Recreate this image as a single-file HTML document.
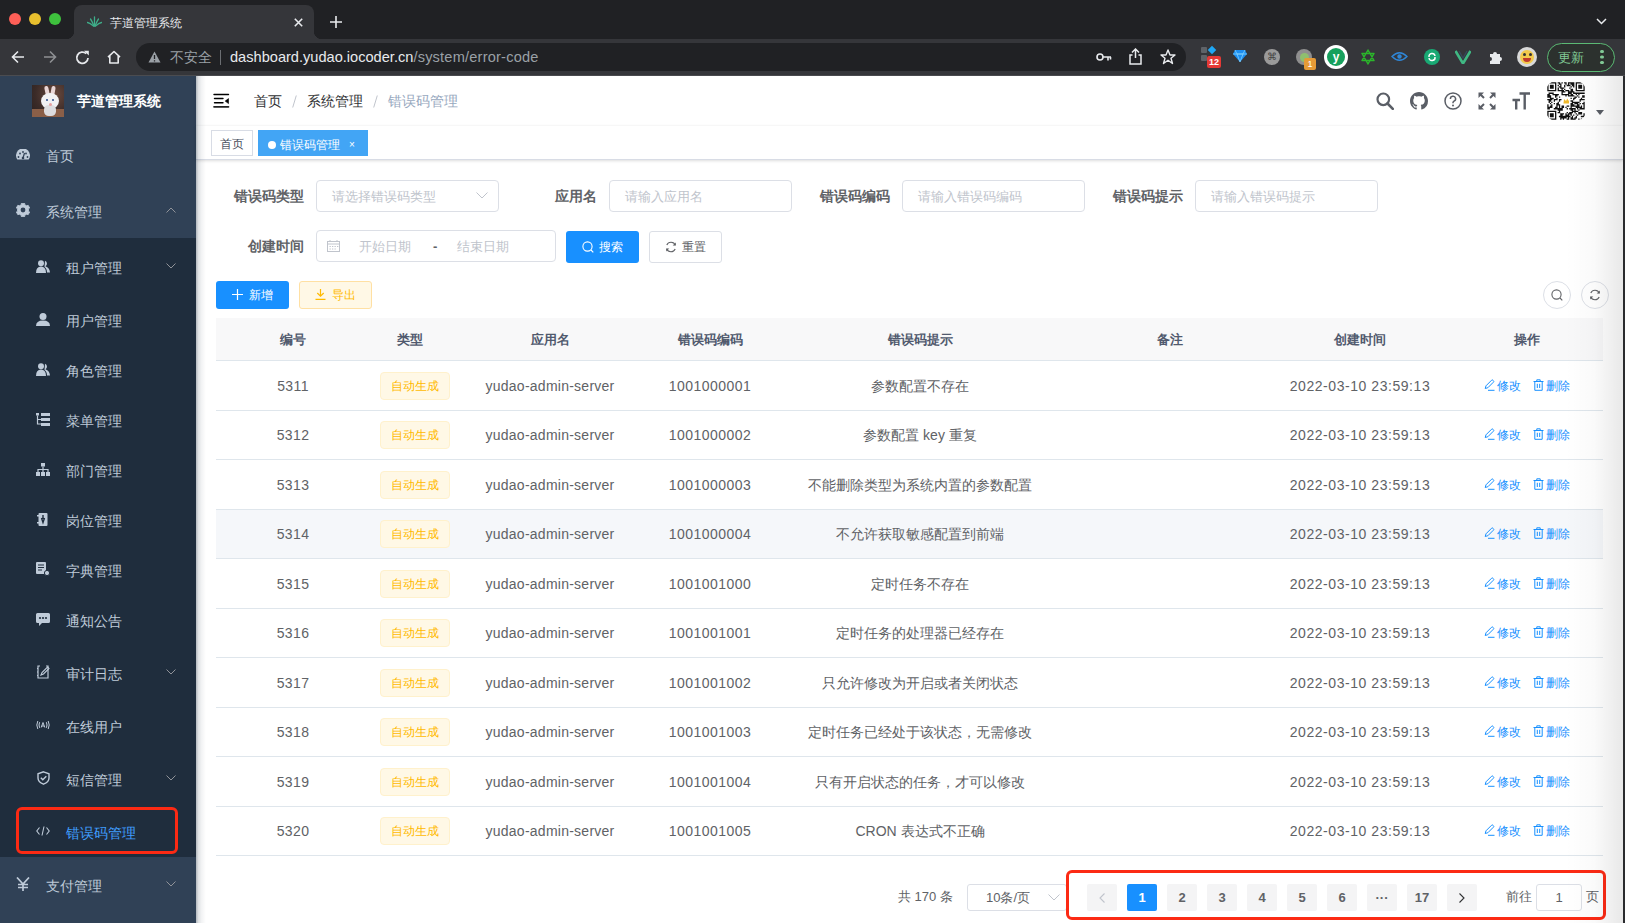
<!DOCTYPE html>
<html><head><meta charset="utf-8">
<style>
*{box-sizing:border-box;margin:0;padding:0}
html,body{width:1625px;height:923px;overflow:hidden;background:#fff;font-family:"Liberation Sans",sans-serif;position:relative}
.abs{position:absolute}
/* chrome */
#tabbar{position:absolute;left:0;top:0;width:1625px;height:39px;background:#202124;z-index:2}
#toolbar{position:absolute;left:0;top:38px;width:1625px;height:37px;background:#35363a}
#tbline{position:absolute;left:0;top:75px;width:1625px;height:1px;background:#4b4c50}
.dot{position:absolute;width:12px;height:12px;border-radius:50%}
#tab{position:absolute;left:74px;top:5px;width:240px;height:34px;background:#35363a;border-radius:8px 8px 0 0}
#tab:before,#tab:after{content:"";position:absolute;bottom:0;width:8px;height:8px}
#tab:before{left:-8px;background:radial-gradient(circle at 0 0,#202124 8px,#35363a 8.5px)}
#tab:after{right:-8px;background:radial-gradient(circle at 100% 0,#202124 8px,#35363a 8.5px)}
#omni{position:absolute;left:136px;top:5px;width:1050px;height:28px;border-radius:14px;background:#202124}
/* sidebar */
#sidebar{position:absolute;left:0;top:76px;width:196px;height:847px;background:#304156;overflow:hidden}
#sub{position:absolute;left:0;top:162px;width:196px;height:619px;background:#1f2d3d}
.mi{position:absolute;left:0;width:196px;color:#bfcbd9;font-size:14px}
.mi span{position:absolute;top:0}
.mi svg{position:absolute}
/* main */
#main{position:absolute;left:196px;top:76px;width:1427px;height:847px;background:#fff}
#navbar{position:absolute;left:0;top:0;width:1427px;height:50px;background:#fff;box-shadow:0 1px 4px rgba(0,21,41,.08)}
#tags{position:absolute;left:0;top:50px;width:1427px;height:34px;background:#fff;border-bottom:1px solid #d8dce5;box-shadow:0 1px 3px 0 rgba(0,0,0,.12),0 0 3px 0 rgba(0,0,0,.04)}
#sbshadow{position:absolute;left:196px;top:76px;width:10px;height:847px;background:linear-gradient(to right,rgba(0,21,41,.30),rgba(0,21,41,.12) 25%,rgba(0,21,41,.05) 55%,rgba(0,21,41,0))}
.tag{position:absolute;top:4px;height:26px;line-height:27px;font-size:12px;border:1px solid #d8dce5;color:#495060;background:#fff;padding:0 8px}
.lbl{position:absolute;font-size:14px;font-weight:bold;color:#606266;line-height:32px;text-align:right}
.inp{position:absolute;height:32px;border:1px solid #dcdfe6;border-radius:4px;background:#fff;font-size:13px;color:#c0c4cc;line-height:32px;padding-left:15px}
.btn{position:absolute;border-radius:3px;font-size:12px;text-align:center}
/* table */
#table{position:absolute;left:20px;top:241px;width:1387px}
.th{position:absolute;top:0;height:44px;line-height:44px;font-size:13px;font-weight:bold;color:#515a6e;text-align:center}
.row{position:absolute;left:0;width:1387px;border-bottom:1px solid #dfe6ec}
.td{position:absolute;top:0;font-size:14px;color:#606266;text-align:center;white-space:nowrap}
.etag{display:inline-block;height:28px;line-height:26px;padding:0 10px;font-size:12px;color:#ffba00;background:#fff8e6;border:1px solid #fff1cc;border-radius:4px}
.op{color:#1890ff;font-size:12px}
.pg{position:absolute;top:808px;width:30px;height:28px;line-height:28px;text-align:center;background:#f4f4f5;color:#606266;font-size:13px;font-weight:bold;border-radius:2px}
.redbox{position:absolute;border:3px solid #fc2a14;border-radius:6px}
</style></head><body>

<!-- ========== CHROME ========== -->
<div id="tabbar">
  <div class="dot" style="left:9px;top:13px;background:#fe5f57"></div>
  <div class="dot" style="left:29px;top:13px;background:#e8bf2e"></div>
  <div class="dot" style="left:49px;top:13px;background:#3ec13d"></div>
  <div id="tab">
    <svg class="abs" style="left:13px;top:11px" width="15" height="11" viewBox="0 0 15 11"><g stroke="#3fae8a" stroke-width="1.3" fill="none" stroke-linecap="round"><path d="M7.5 10 L7.5 1"/><path d="M7 10 Q5 5 3.5 3"/><path d="M8 10 Q10 5 11.5 3"/><path d="M6.5 10 Q3 7 0.5 6.5"/><path d="M8.5 10 Q12 7 14.5 6.5"/></g></svg>
    <div class="abs" style="left:36px;top:9.5px;font-size:12px;color:#e8eaed;line-height:16px">芋道管理系统</div>
    <svg class="abs" style="left:220px;top:13px" width="9" height="9" viewBox="0 0 9 9"><path d="M0.8 0.8L8.2 8.2M8.2 0.8L0.8 8.2" stroke="#e8eaed" stroke-width="1.6"/></svg>
  </div>
  <svg class="abs" style="left:330px;top:16px" width="12" height="12" viewBox="0 0 12 12"><path d="M6 0V12M0 6H12" stroke="#e8eaed" stroke-width="1.6"/></svg>
  <svg class="abs" style="left:1596px;top:18px" width="11" height="7" viewBox="0 0 11 7"><path d="M1 1L5.5 5.5L10 1" stroke="#e8eaed" stroke-width="1.5" fill="none"/></svg>
</div>
<div id="toolbar">
  <svg class="abs" style="left:11px;top:12px" width="14" height="14" viewBox="0 0 14 14"><path d="M13 7H1.5M7 1.5L1.5 7L7 12.5" stroke="#e8eaed" stroke-width="1.6" fill="none"/></svg>
  <svg class="abs" style="left:43px;top:12px" width="14" height="14" viewBox="0 0 14 14"><path d="M1 7H12.5M7 1.5L12.5 7L7 12.5" stroke="#8e9093" stroke-width="1.6" fill="none"/></svg>
  <svg class="abs" style="left:75px;top:12px" width="15" height="15" viewBox="0 0 15 15"><path d="M13 8A5.6 5.6 0 1 1 11.2 3.6" stroke="#e8eaed" stroke-width="1.8" fill="none"/><path d="M9 0.8L13.8 0.8L13.8 5.6Z" fill="#e8eaed"/></svg>
  <svg class="abs" style="left:107px;top:12px" width="14" height="14" viewBox="0 0 14 14"><path d="M1 7.2L7 1.5L13 7.2M2.8 5.8V13H11.2V5.8" stroke="#e8eaed" stroke-width="1.6" fill="none" stroke-linejoin="round"/></svg>
  <div id="omni">
    <svg class="abs" style="left:12px;top:8px" width="13" height="12" viewBox="0 0 13 12"><path d="M6.5 0.5L12.5 11.5H0.5Z" fill="#9aa0a6"/><path d="M6.5 4V8M6.5 9.2V10.4" stroke="#202124" stroke-width="1.3"/></svg>
    <div class="abs" style="left:34px;top:5px;font-size:14px;color:#9aa0a6;line-height:18px">不安全</div>
    <div class="abs" style="left:84px;top:7px;width:1px;height:15px;background:#6b6e72"></div>
    <div class="abs" style="left:94px;top:5px;font-size:14.6px;color:#e8eaed;line-height:18px;white-space:nowrap">dashboard.yudao.iocoder.cn<span style="color:#9aa0a6;letter-spacing:0.2px">/system/error-code</span></div>
    <svg class="abs" style="left:960px;top:9px" width="16" height="10" viewBox="0 0 16 10"><circle cx="4" cy="5" r="3" stroke="#e8eaed" stroke-width="1.6" fill="none"/><path d="M7 5H15M12 5V8.5M14.5 5V7.5" stroke="#e8eaed" stroke-width="1.6"/></svg>
    <svg class="abs" style="left:993px;top:5px" width="13" height="17" viewBox="0 0 13 17"><path d="M6.5 1V10M3 4.5L6.5 1L10 4.5M3.5 7H1V16H12V7H9.5" stroke="#e8eaed" stroke-width="1.5" fill="none"/></svg>
    <svg class="abs" style="left:1024px;top:6px" width="16" height="16" viewBox="0 0 16 16"><path d="M8 1L10 6H15L11 9.2L12.5 14.5L8 11.3L3.5 14.5L5 9.2L1 6H6Z" stroke="#e8eaed" stroke-width="1.4" fill="none" stroke-linejoin="round"/></svg>
  </div>
  <!-- extensions -->
  <div class="abs" style="left:1201px;top:9px;width:6px;height:6px;background:#5f6368;border-radius:1px"></div>
  <div class="abs" style="left:1201px;top:17px;width:6px;height:6px;background:#5f6368;border-radius:1px"></div>
  <div class="abs" style="left:1209px;top:9px;width:6px;height:6px;background:#1ea8f5;transform:rotate(45deg)"></div>
  <div class="abs" style="left:1207px;top:18px;width:14px;height:12px;background:#e53935;border-radius:2px;color:#fff;font-size:9px;line-height:12px;text-align:center;font-weight:bold">12</div>
  <svg class="abs" style="left:1233px;top:11px" width="14" height="14" viewBox="0 0 14 14"><path d="M2 1H12L14 5L7 13L0 5Z" fill="#1d8ff2"/><path d="M2 1L4 5H10L12 1M0 5H14M4 5L7 13L10 5" stroke="#7fd0ff" stroke-width="0.8" fill="none"/></svg>
  <div class="abs" style="left:1264px;top:11px;width:16px;height:16px;border-radius:50%;background:#9a9a9a;color:#444;font-size:10px;line-height:16px;text-align:center">⌘</div>
  <div class="abs" style="left:1296px;top:11px;width:16px;height:16px;border-radius:50%;background:#8f8f8f"></div>
  <div class="abs" style="left:1300px;top:15px;width:9px;height:9px;border-radius:50%;background:#8fbf6e"></div>
  <div class="abs" style="left:1304px;top:20px;width:12px;height:12px;background:#e59a36;border-radius:2px;color:#fff;font-size:9px;line-height:12px;text-align:center">1</div>
  <div class="abs" style="left:1324px;top:7px;width:24px;height:24px;border-radius:50%;background:#fff"></div>
  <div class="abs" style="left:1327px;top:10px;width:18px;height:18px;border-radius:50%;background:#17a05d;color:#fff;font-size:12px;line-height:18px;text-align:center;font-weight:bold">y</div>
  <svg class="abs" style="left:1360px;top:11px" width="16" height="16" viewBox="0 0 16 16"><path d="M8 1L14 11.5H2Z M8 15L2 4.5H14Z" stroke="#2bb52b" stroke-width="1.5" fill="none" stroke-linejoin="round"/></svg>
  <svg class="abs" style="left:1391px;top:13px" width="17" height="11" viewBox="0 0 17 11"><path d="M1 5.5Q8.5 -2 16 5.5Q8.5 13 1 5.5Z" stroke="#2f86d6" stroke-width="1.4" fill="none"/><circle cx="8.5" cy="5.5" r="2.2" fill="#2f86d6"/></svg>
  <div class="abs" style="left:1424px;top:11px;width:16px;height:16px;border-radius:50%;background:#19a974"></div>
  <svg class="abs" style="left:1427px;top:14px" width="10" height="10" viewBox="0 0 10 10"><path d="M2 5A3 3 0 0 1 8 4M8 5A3 3 0 0 1 2 6" stroke="#fff" stroke-width="1.4" fill="none"/></svg>
  <svg class="abs" style="left:1455px;top:12px" width="16" height="14" viewBox="0 0 16 14"><path d="M0.5 1L8 13.5L15.5 1" stroke="#40b883" stroke-width="2.6" fill="none"/><path d="M4 1L8 8L12 1" stroke="#35495e" stroke-width="1.2" fill="none"/></svg>
  <svg class="abs" style="left:1488px;top:12px" width="15" height="15" viewBox="0 0 15 15"><path d="M2 4H5A2 2 0 1 1 9 4H12V7A2 2 0 1 1 12 11V14H2V11A2 2 0 1 0 2 7Z" fill="#e8eaed"/></svg>
  <div class="abs" style="left:1517px;top:9px;width:20px;height:20px;border-radius:50%;background:#d9d9d9"></div>
  <div class="abs" style="left:1520px;top:12px;width:14px;height:14px;border-radius:50%;background:#f2c94c"></div><div class="abs" style="left:1523px;top:15px;width:3px;height:3px;border-radius:50%;background:#333"></div><div class="abs" style="left:1529px;top:15px;width:3px;height:3px;border-radius:50%;background:#333"></div><div class="abs" style="left:1523px;top:20px;width:8px;height:4px;border-radius:0 0 4px 4px;background:#c0392b"></div>
  <div class="abs" style="left:1547px;top:5px;width:68px;height:29px;border-radius:14.5px;border:1.5px solid #5bb974;background:#2c312e"></div>
  <div class="abs" style="left:1558px;top:11.5px;font-size:13px;color:#81c995;line-height:16px">更新</div>
  <div class="abs" style="left:1600px;top:11.5px;width:3.5px;height:3.5px;border-radius:50%;background:#81c995;box-shadow:0 5.5px 0 #81c995,0 11px 0 #81c995"></div>
</div>
<div id="tbline"></div>

<!-- ========== SIDEBAR ========== -->
<div id="sidebar">
  <div id="sub"></div>
  <div class="abs" style="left:32px;top:9px;width:32px;height:32px;background:radial-gradient(circle at 70% 30%,#6a4a3e,#3b2b28 60%,#2a201e);overflow:hidden"><div class="abs" style="left:0;top:24px;width:32px;height:8px;background:#8a5f48"></div><div class="abs" style="left:13px;top:1px;width:4px;height:10px;border-radius:3px;background:#e9d6d6;transform:rotate(-12deg)"></div><div class="abs" style="left:19px;top:1px;width:4px;height:10px;border-radius:3px;background:#e9d6d6;transform:rotate(10deg)"></div><div class="abs" style="left:9px;top:8px;width:18px;height:16px;border-radius:50%;background:#f1f1f3"></div><div class="abs" style="left:12px;top:20px;width:12px;height:11px;border-radius:40%;background:#dcdcdf"></div><div class="abs" style="left:14px;top:14px;width:2px;height:2px;border-radius:50%;background:#2a4a8a"></div><div class="abs" style="left:20px;top:14px;width:2px;height:2px;border-radius:50%;background:#2a4a8a"></div><div class="abs" style="left:17px;top:18px;width:3px;height:3px;border-radius:50%;background:#e7a0a0"></div></div>
  <div class="abs" style="left:77px;top:16px;font-size:14px;font-weight:bold;color:#fff;line-height:18px;white-space:nowrap">芋道管理系统</div>
  <div class="mi" style="top:50px;height:56px"><div class="abs" style="left:16.0px;top:22.5px;line-height:0"><svg width="14" height="11" viewBox="0 0 14 11"><path d="M1.3 10.5A7 7 0 1 1 12.7 10.5Z" fill="#bfcbd9"/><circle cx="2.5" cy="8" r=".9" fill="#304156"/><circle cx="4" cy="4.5" r=".9" fill="#304156"/><circle cx="7" cy="3" r=".9" fill="#304156"/><circle cx="10" cy="4.5" r=".9" fill="#304156"/><circle cx="11.5" cy="8" r=".9" fill="#304156"/><path d="M7 9L8.5 4" stroke="#304156" stroke-width="1.2"/><circle cx="7" cy="9" r="1.3" fill="#304156"/></svg></div><span style="left:46px;top:20.5px;line-height:18px;color:#bfcbd9">首页</span></div>
  <div class="mi" style="top:106px;height:56px"><div class="abs" style="left:16.0px;top:21.0px;line-height:0"><svg width="14" height="14" viewBox="0 0 14 14"><path d="M5.40 0.18L8.60 0.18L8.73 1.67L10.75 2.84L12.10 2.21L13.70 4.98L12.48 5.84L12.48 8.16L13.70 9.02L12.10 11.79L10.75 11.16L8.73 12.33L8.60 13.82L5.40 13.82L5.27 12.33L3.25 11.16L1.90 11.79L0.30 9.02L1.52 8.16L1.52 5.84L0.30 4.98L1.90 2.21L3.25 2.84L5.27 1.67Z" fill="#bfcbd9" stroke="#bfcbd9" stroke-width="0.8" stroke-linejoin="round"/><circle cx="7" cy="7" r="2.4" fill="#304156"/></svg></div><span style="left:46px;top:20.5px;line-height:18px;color:#bfcbd9">系统管理</span><div class="abs" style="left:166px;top:25.0px;line-height:0"><svg width="10" height="6" viewBox="0 0 10 6"><path d="M0.5 5.5L5 1L9.5 5.5" stroke="#909399" stroke-width="1" fill="none"/></svg></div></div>
  <div class="mi" style="top:162px;height:56px"><div class="abs" style="left:36.0px;top:21.5px;line-height:0"><svg width="14" height="13" viewBox="0 0 14 13"><circle cx="5" cy="3.3" r="3" fill="#bfcbd9"/><path d="M0 13Q0 6.5 5 6.5Q10 6.5 10 13Z" fill="#bfcbd9"/><path d="M9 0.8A3 3 0 0 1 9.5 6.2Q13.5 7.5 14 12.5H11Q11 8.5 8.5 7" fill="#bfcbd9"/></svg></div><span style="left:66px;top:20.5px;line-height:18px;color:#bfcbd9">租户管理</span><div class="abs" style="left:166px;top:25.0px;line-height:0"><svg width="10" height="6" viewBox="0 0 10 6"><path d="M0.5 0.5L5 5L9.5 0.5" stroke="#909399" stroke-width="1" fill="none"/></svg></div></div>
  <div class="mi" style="top:218px;height:50px"><div class="abs" style="left:36.0px;top:18.5px;line-height:0"><svg width="14" height="13" viewBox="0 0 14 13"><ellipse cx="7" cy="3.5" rx="3.5" ry="3.5" fill="#bfcbd9"/><path d="M0 13Q0 7.5 7 7.5Q14 7.5 14 13Z" fill="#bfcbd9"/></svg></div><span style="left:66px;top:17.5px;line-height:18px;color:#bfcbd9">用户管理</span></div>
  <div class="mi" style="top:268px;height:50px"><div class="abs" style="left:36.0px;top:18.5px;line-height:0"><svg width="14" height="13" viewBox="0 0 14 13"><circle cx="5" cy="3.3" r="3" fill="#bfcbd9"/><path d="M0 13Q0 6.5 5 6.5Q10 6.5 10 13Z" fill="#bfcbd9"/><path d="M9 0.8A3 3 0 0 1 9.5 6.2Q13.5 7.5 14 12.5H11Q11 8.5 8.5 7" fill="#bfcbd9"/></svg></div><span style="left:66px;top:17.5px;line-height:18px;color:#bfcbd9">角色管理</span></div>
  <div class="mi" style="top:318px;height:50px"><div class="abs" style="left:36.0px;top:18.5px;line-height:0"><svg width="14" height="13" viewBox="0 0 14 13"><rect x="0" y="0" width="3" height="2.5" fill="#bfcbd9"/><path d="M1.5 2.5V11H5M1.5 6.5H5" stroke="#bfcbd9" stroke-width="1.2" fill="none"/><rect x="5" y="0" width="9" height="3" fill="#bfcbd9"/><rect x="5" y="5" width="9" height="3" fill="#bfcbd9"/><rect x="5" y="10" width="9" height="3" fill="#bfcbd9"/></svg></div><span style="left:66px;top:17.5px;line-height:18px;color:#bfcbd9">菜单管理</span></div>
  <div class="mi" style="top:368px;height:50px"><div class="abs" style="left:36.0px;top:18.5px;line-height:0"><svg width="14" height="13" viewBox="0 0 14 13"><rect x="5" y="0" width="4" height="3.5" fill="#bfcbd9"/><path d="M7 3.5V6.5M2 9V6.5H12V9M7 6.5V9" stroke="#bfcbd9" stroke-width="1.2" fill="none"/><rect x="0" y="9" width="4" height="4" fill="#bfcbd9"/><rect x="5" y="9" width="4" height="4" fill="#bfcbd9"/><rect x="10" y="9" width="4" height="4" fill="#bfcbd9"/></svg></div><span style="left:66px;top:17.5px;line-height:18px;color:#bfcbd9">部门管理</span></div>
  <div class="mi" style="top:418px;height:50px"><div class="abs" style="left:37.0px;top:18.5px;line-height:0"><svg width="12" height="13" viewBox="0 0 12 13"><rect x="1.5" y="0" width="9" height="13" rx="1" fill="#bfcbd9"/><rect x="0" y="2" width="2" height="1.5" fill="#bfcbd9"/><rect x="0" y="9" width="2" height="1.5" fill="#bfcbd9"/><path d="M6 2V6M4.5 5L6 9.5L7.5 5" stroke="#1f2d3d" stroke-width="1.4" fill="none"/></svg></div><span style="left:66px;top:17.5px;line-height:18px;color:#bfcbd9">岗位管理</span></div>
  <div class="mi" style="top:468px;height:50px"><div class="abs" style="left:36.0px;top:18.0px;line-height:0"><svg width="14" height="14" viewBox="0 0 14 14"><rect x="0" y="0" width="10" height="12" rx="1" fill="#bfcbd9"/><path d="M2 3H8M2 5.5H8M2 8H6" stroke="#1f2d3d" stroke-width="1.1"/><circle cx="11" cy="11" r="2.6" fill="#bfcbd9" stroke="#1f2d3d" stroke-width="1"/></svg></div><span style="left:66px;top:17.5px;line-height:18px;color:#bfcbd9">字典管理</span></div>
  <div class="mi" style="top:518px;height:50px"><div class="abs" style="left:36.0px;top:18.5px;line-height:0"><svg width="14" height="13" viewBox="0 0 14 13"><path d="M1.5 0H12.5A1.5 1.5 0 0 1 14 1.5V8.5A1.5 1.5 0 0 1 12.5 10H6L3 13V10H1.5A1.5 1.5 0 0 1 0 8.5V1.5A1.5 1.5 0 0 1 1.5 0Z" fill="#bfcbd9"/><circle cx="4" cy="5" r="1.1" fill="#1f2d3d"/><circle cx="7" cy="5" r="1.1" fill="#1f2d3d"/><circle cx="10" cy="5" r="1.1" fill="#1f2d3d"/></svg></div><span style="left:66px;top:17.5px;line-height:18px;color:#bfcbd9">通知公告</span></div>
  <div class="mi" style="top:568px;height:56px"><div class="abs" style="left:36.5px;top:21.0px;line-height:0"><svg width="13" height="14" viewBox="0 0 13 14"><path d="M9 1H11V13H1V1H3M1 3.5H0M1 7H0M1 10.5H0" stroke="#bfcbd9" stroke-width="1.2" fill="none"/><path d="M4 10L5 7.5L10.5 2L12 3.5L6.5 9Z" stroke="#bfcbd9" stroke-width="1.1" fill="none"/></svg></div><span style="left:66px;top:20.5px;line-height:18px;color:#bfcbd9">审计日志</span><div class="abs" style="left:166px;top:25.0px;line-height:0"><svg width="10" height="6" viewBox="0 0 10 6"><path d="M0.5 0.5L5 5L9.5 0.5" stroke="#909399" stroke-width="1" fill="none"/></svg></div></div>
  <div class="mi" style="top:624px;height:50px"><div class="abs" style="left:36.0px;top:20.0px;line-height:0"><svg width="14" height="10" viewBox="0 0 14 10"><path d="M1.8 1Q-0.2 5 1.8 9M12.2 1Q14.2 5 12.2 9M3.6 2.2Q2.4 5 3.6 7.8M10.4 2.2Q11.6 5 10.4 7.8" stroke="#bfcbd9" stroke-width="1" fill="none"/><path d="M5.2 7.5L7 2.5L8.8 7.5M5.8 6H8.2" stroke="#bfcbd9" stroke-width="1" fill="none"/></svg></div><span style="left:66px;top:17.5px;line-height:18px;color:#bfcbd9">在线用户</span></div>
  <div class="mi" style="top:674px;height:56px"><div class="abs" style="left:36.5px;top:21.0px;line-height:0"><svg width="13" height="14" viewBox="0 0 13 14"><path d="M6.5 0.8L12 2.8V7Q12 11 6.5 13.2Q1 11 1 7V2.8Z" stroke="#bfcbd9" stroke-width="1.4" fill="none"/><path d="M3.8 6.8L5.8 8.8L9.3 5.3" stroke="#bfcbd9" stroke-width="1.4" fill="none"/></svg></div><span style="left:66px;top:20.5px;line-height:18px;color:#bfcbd9">短信管理</span><div class="abs" style="left:166px;top:25.0px;line-height:0"><svg width="10" height="6" viewBox="0 0 10 6"><path d="M0.5 0.5L5 5L9.5 0.5" stroke="#909399" stroke-width="1" fill="none"/></svg></div></div>
  <div class="mi" style="top:730px;height:50px"><div class="abs" style="left:36.0px;top:20.0px;line-height:0"><svg width="14" height="10" viewBox="0 0 14 10"><path d="M3.5 1.5L0.8 5L3.5 8.5M10.5 1.5L13.2 5L10.5 8.5M8 0.5L6 9.5" stroke="#bfcbd9" stroke-width="1.1" fill="none"/></svg></div><span style="left:66px;top:17.5px;line-height:18px;color:#409eff">错误码管理</span></div>
  <div class="mi" style="top:780px;height:56px"><div class="abs" style="left:16.0px;top:21.0px;line-height:0"><svg width="14" height="14" viewBox="0 0 14 14"><path d="M1 0.5L7 7L13 0.5M7 7V14M2 7.5H12M2 10.5H12" stroke="#bfcbd9" stroke-width="1.7" fill="none"/></svg></div><span style="left:46px;top:20.5px;line-height:18px;color:#bfcbd9">支付管理</span><div class="abs" style="left:166px;top:25.0px;line-height:0"><svg width="10" height="6" viewBox="0 0 10 6"><path d="M0.5 0.5L5 5L9.5 0.5" stroke="#909399" stroke-width="1" fill="none"/></svg></div></div>
</div>
<!-- ========== MAIN ========== -->
<div id="main">
  <div id="navbar">
    <svg class="abs" style="left:17px;top:17px" width="17" height="16" viewBox="0 0 17 16"><path d="M1 1.5H15.5M1.5 5.5H10M1.5 9.7H10" stroke="#000" stroke-width="1.4" stroke-linecap="round"/><path d="M1 13.8H15.5" stroke="#222" stroke-width="1.7" stroke-linecap="round"/><path d="M15.5 5.6L12.2 8.1L15.5 10.6Z" fill="#000" stroke="#000" stroke-width="0.6" stroke-linejoin="round"/></svg>
    <div class="abs" style="left:58px;top:16px;font-size:14px;line-height:18px;color:#303133;white-space:nowrap">首页<span style="display:inline-block;margin:0 10px;vertical-align:-2px;line-height:0"><svg width="5" height="13" viewBox="0 0 5 13"><path d="M4.3 0.5L0.7 12.5" stroke="#c0c4cc" stroke-width="1"/></svg></span>系统管理<span style="display:inline-block;margin:0 10px;vertical-align:-2px;line-height:0"><svg width="5" height="13" viewBox="0 0 5 13"><path d="M4.3 0.5L0.7 12.5" stroke="#c0c4cc" stroke-width="1"/></svg></span><span style="color:#97a8be">错误码管理</span></div>
    <svg class="abs" style="left:1180px;top:16px" width="18" height="18" viewBox="0 0 18 18"><circle cx="7.3" cy="7.3" r="5.8" stroke="#5a5e66" stroke-width="2.2" fill="none"/><path d="M11.5 11.5L16.8 16.8" stroke="#5a5e66" stroke-width="2.6" stroke-linecap="round"/></svg>
    <svg class="abs" style="left:1214px;top:16px" width="18" height="18" viewBox="0 0 16 16"><path fill="#5a5e66" d="M8 0C3.58 0 0 3.58 0 8c0 3.540 2.29 6.53 5.47 7.59.4.07.55-.17.55-.38 0-.19-.01-.82-.01-1.49-2.01.37-2.53-.49-2.69-.94-.09-.23-.48-.94-.82-1.13-.28-.15-.68-.52-.01-.53.63-.01 1.08.58 1.23.82.72 1.21 1.87.87 2.33.66.07-.52.28-.87.51-1.07-1.78-.2-3.64-.89-3.64-3.95 0-.87.31-1.59.82-2.15-.08-.2-.36-1.02.08-2.12 0 0 .67-.21 2.2.82.64-.18 1.32-.27 2-.27.68 0 1.36.09 2 .27 1.53-1.04 2.2-.82 2.2-.82.44 1.1.16 1.92.08 2.12.51.56.82 1.27.82 2.15 0 3.07-1.87 3.75-3.65 3.95.29.25.54.73.54 1.48 0 1.07-.01 1.93-.01 2.2 0 .21.15.46.55.38A8.013 8.013 0 0 0 16 8c0-4.42-3.58-8-8-8z"/></svg>
    <svg class="abs" style="left:1248px;top:16px" width="18" height="18" viewBox="0 0 18 18"><circle cx="9" cy="9" r="8" stroke="#5a5e66" stroke-width="1.5" fill="none"/><path d="M6.4 7A2.6 2.6 0 1 1 9.8 9.3Q9 9.7 9 10.8V11.3" stroke="#5a5e66" stroke-width="1.5" fill="none"/><circle cx="9" cy="13.5" r="1" fill="#5a5e66"/></svg>
    <svg class="abs" style="left:1282px;top:16px" width="18" height="18" viewBox="0 0 18 18"><g stroke="#5a5e66" stroke-width="2" fill="none"><path d="M1.5 1.5L6 6M16.5 1.5L12 6M1.5 16.5L6 12M16.5 16.5L12 12"/></g><g fill="#5a5e66"><path d="M0.5 0.5H6L0.5 6Z"/><path d="M17.5 0.5H12L17.5 6Z"/><path d="M0.5 17.5H6L0.5 12Z"/><path d="M17.5 17.5H12L17.5 12Z"/></g></svg>
    <svg class="abs" style="left:1316px;top:16px" width="18" height="18" viewBox="0 0 18 18"><path d="M7.5 1.5H18M12.7 1.5V17.5M0.5 8H8M4.2 8V17.5" stroke="#5a5e66" stroke-width="2.4" fill="none"/></svg>
    <div class="abs" style="left:1350px;top:5px;width:40px;height:40px;border-radius:10px;overflow:hidden;background:#fff">
      <svg width="40" height="40" viewBox="-1 -1 31 31"><rect x="-1" y="-1" width="31" height="31" fill="#fff"/><path fill="#111" fill-rule="evenodd" d="M0 0h7v7h-7zM1 1v5h5v-5zM2 2h3v3h-3zM22 0h7v7h-7zM23 1v5h5v-5zM24 2h3v3h-3zM0 22h7v7h-7zM1 23v5h5v-5zM2 24h3v3h-3z"/><path fill="#111" d="M8 0h1v1h-1zM9 0h1v1h-1zM11 0h1v1h-1zM13 0h1v1h-1zM14 0h1v1h-1zM16 0h1v1h-1zM17 0h1v1h-1zM18 0h1v1h-1zM19 0h1v1h-1zM20 0h1v1h-1zM9 1h1v1h-1zM10 1h1v1h-1zM14 1h1v1h-1zM16 1h1v1h-1zM18 1h1v1h-1zM19 1h1v1h-1zM20 1h1v1h-1zM8 2h1v1h-1zM10 2h1v1h-1zM13 2h1v1h-1zM15 2h1v1h-1zM16 2h1v1h-1zM17 2h1v1h-1zM19 2h1v1h-1zM20 2h1v1h-1zM9 3h1v1h-1zM10 3h1v1h-1zM13 3h1v1h-1zM18 3h1v1h-1zM20 3h1v1h-1zM8 4h1v1h-1zM10 4h1v1h-1zM11 4h1v1h-1zM12 4h1v1h-1zM17 4h1v1h-1zM8 5h1v1h-1zM11 5h1v1h-1zM13 5h1v1h-1zM18 5h1v1h-1zM19 5h1v1h-1zM8 6h1v1h-1zM9 6h1v1h-1zM10 6h1v1h-1zM11 6h1v1h-1zM12 6h1v1h-1zM14 6h1v1h-1zM15 6h1v1h-1zM16 6h1v1h-1zM18 6h1v1h-1zM19 6h1v1h-1zM11 7h1v1h-1zM12 7h1v1h-1zM13 7h1v1h-1zM16 7h1v1h-1zM17 7h1v1h-1zM18 7h1v1h-1zM19 7h1v1h-1zM20 7h1v1h-1zM1 8h1v1h-1zM2 8h1v1h-1zM3 8h1v1h-1zM4 8h1v1h-1zM11 8h1v1h-1zM16 8h1v1h-1zM17 8h1v1h-1zM18 8h1v1h-1zM20 8h1v1h-1zM21 8h1v1h-1zM22 8h1v1h-1zM23 8h1v1h-1zM24 8h1v1h-1zM25 8h1v1h-1zM26 8h1v1h-1zM27 8h1v1h-1zM28 8h1v1h-1zM0 9h1v1h-1zM1 9h1v1h-1zM4 9h1v1h-1zM5 9h1v1h-1zM6 9h1v1h-1zM7 9h1v1h-1zM8 9h1v1h-1zM11 9h1v1h-1zM12 9h1v1h-1zM13 9h1v1h-1zM14 9h1v1h-1zM15 9h1v1h-1zM16 9h1v1h-1zM18 9h1v1h-1zM19 9h1v1h-1zM22 9h1v1h-1zM24 9h1v1h-1zM0 10h1v1h-1zM1 10h1v1h-1zM2 10h1v1h-1zM6 10h1v1h-1zM7 10h1v1h-1zM14 10h1v1h-1zM16 10h1v1h-1zM17 10h1v1h-1zM18 10h1v1h-1zM19 10h1v1h-1zM20 10h1v1h-1zM23 10h1v1h-1zM27 10h1v1h-1zM28 10h1v1h-1zM0 11h1v1h-1zM1 11h1v1h-1zM2 11h1v1h-1zM6 11h1v1h-1zM9 11h1v1h-1zM21 11h1v1h-1zM22 11h1v1h-1zM24 11h1v1h-1zM27 11h1v1h-1zM28 11h1v1h-1zM2 12h1v1h-1zM3 12h1v1h-1zM4 12h1v1h-1zM7 12h1v1h-1zM18 12h1v1h-1zM20 12h1v1h-1zM21 12h1v1h-1zM26 12h1v1h-1zM0 13h1v1h-1zM1 13h1v1h-1zM2 13h1v1h-1zM3 13h1v1h-1zM5 13h1v1h-1zM6 13h1v1h-1zM7 13h1v1h-1zM9 13h1v1h-1zM10 13h1v1h-1zM20 13h1v1h-1zM25 13h1v1h-1zM26 13h1v1h-1zM27 13h1v1h-1zM28 13h1v1h-1zM1 14h1v1h-1zM2 14h1v1h-1zM5 14h1v1h-1zM9 14h1v1h-1zM18 14h1v1h-1zM19 14h1v1h-1zM25 14h1v1h-1zM1 15h1v1h-1zM3 15h1v1h-1zM8 15h1v1h-1zM19 15h1v1h-1zM20 15h1v1h-1zM21 15h1v1h-1zM22 15h1v1h-1zM23 15h1v1h-1zM24 15h1v1h-1zM28 15h1v1h-1zM2 16h1v1h-1zM5 16h1v1h-1zM7 16h1v1h-1zM8 16h1v1h-1zM18 16h1v1h-1zM19 16h1v1h-1zM21 16h1v1h-1zM22 16h1v1h-1zM23 16h1v1h-1zM25 16h1v1h-1zM27 16h1v1h-1zM28 16h1v1h-1zM0 17h1v1h-1zM3 17h1v1h-1zM7 17h1v1h-1zM8 17h1v1h-1zM9 17h1v1h-1zM18 17h1v1h-1zM19 17h1v1h-1zM20 17h1v1h-1zM23 17h1v1h-1zM24 17h1v1h-1zM28 17h1v1h-1zM0 18h1v1h-1zM2 18h1v1h-1zM3 18h1v1h-1zM7 18h1v1h-1zM9 18h1v1h-1zM11 18h1v1h-1zM12 18h1v1h-1zM15 18h1v1h-1zM16 18h1v1h-1zM18 18h1v1h-1zM19 18h1v1h-1zM20 18h1v1h-1zM21 18h1v1h-1zM22 18h1v1h-1zM23 18h1v1h-1zM24 18h1v1h-1zM26 18h1v1h-1zM28 18h1v1h-1zM0 19h1v1h-1zM1 19h1v1h-1zM2 19h1v1h-1zM3 19h1v1h-1zM6 19h1v1h-1zM7 19h1v1h-1zM9 19h1v1h-1zM11 19h1v1h-1zM12 19h1v1h-1zM14 19h1v1h-1zM18 19h1v1h-1zM22 19h1v1h-1zM23 19h1v1h-1zM24 19h1v1h-1zM25 19h1v1h-1zM26 19h1v1h-1zM28 19h1v1h-1zM0 20h1v1h-1zM1 20h1v1h-1zM5 20h1v1h-1zM6 20h1v1h-1zM7 20h1v1h-1zM8 20h1v1h-1zM9 20h1v1h-1zM10 20h1v1h-1zM11 20h1v1h-1zM15 20h1v1h-1zM17 20h1v1h-1zM18 20h1v1h-1zM19 20h1v1h-1zM20 20h1v1h-1zM21 20h1v1h-1zM23 20h1v1h-1zM25 20h1v1h-1zM26 20h1v1h-1zM27 20h1v1h-1zM28 20h1v1h-1zM8 21h1v1h-1zM9 21h1v1h-1zM10 21h1v1h-1zM11 21h1v1h-1zM18 21h1v1h-1zM19 21h1v1h-1zM21 21h1v1h-1zM24 21h1v1h-1zM9 22h1v1h-1zM19 22h1v1h-1zM20 22h1v1h-1zM21 22h1v1h-1zM22 22h1v1h-1zM23 22h1v1h-1zM8 23h1v1h-1zM9 23h1v1h-1zM15 23h1v1h-1zM17 23h1v1h-1zM18 23h1v1h-1zM19 23h1v1h-1zM21 23h1v1h-1zM24 23h1v1h-1zM25 23h1v1h-1zM26 23h1v1h-1zM10 24h1v1h-1zM11 24h1v1h-1zM12 24h1v1h-1zM14 24h1v1h-1zM16 24h1v1h-1zM17 24h1v1h-1zM18 24h1v1h-1zM22 24h1v1h-1zM24 24h1v1h-1zM25 24h1v1h-1zM26 24h1v1h-1zM28 24h1v1h-1zM10 25h1v1h-1zM11 25h1v1h-1zM14 25h1v1h-1zM15 25h1v1h-1zM16 25h1v1h-1zM18 25h1v1h-1zM20 25h1v1h-1zM23 25h1v1h-1zM28 25h1v1h-1zM9 26h1v1h-1zM10 26h1v1h-1zM11 26h1v1h-1zM12 26h1v1h-1zM13 26h1v1h-1zM14 26h1v1h-1zM15 26h1v1h-1zM16 26h1v1h-1zM17 26h1v1h-1zM19 26h1v1h-1zM22 26h1v1h-1zM26 26h1v1h-1zM27 26h1v1h-1zM28 26h1v1h-1zM10 27h1v1h-1zM11 27h1v1h-1zM12 27h1v1h-1zM13 27h1v1h-1zM14 27h1v1h-1zM16 27h1v1h-1zM18 27h1v1h-1zM19 27h1v1h-1zM21 27h1v1h-1zM22 27h1v1h-1zM10 28h1v1h-1zM12 28h1v1h-1zM15 28h1v1h-1zM16 28h1v1h-1zM18 28h1v1h-1zM19 28h1v1h-1zM20 28h1v1h-1zM21 28h1v1h-1zM24 28h1v1h-1zM26 28h1v1h-1zM28 28h1v1h-1z"/><rect x="11.5" y="11.5" width="6" height="6" fill="#fff"/><path d="M12.5 16.5L13 13L14.5 14.5L15.5 12.5L16.5 14.5L17 13L16.8 16.5Z" fill="#f0b92c"/></svg>
    </div>
    <svg class="abs" style="left:1400px;top:34px" width="8" height="5" viewBox="0 0 8 5"><path d="M0 0H8L4 5Z" fill="#5a5e66"/></svg>
  </div>
  <div id="tags">
    <div class="tag" style="left:15px">首页</div>
    <div class="tag" style="left:62px;background:#42a5f5;border-color:#42a5f5;color:#fff;padding-left:9px;padding-right:12px"><span style="display:inline-block;width:8px;height:8px;border-radius:50%;background:#fff;margin-right:4px;position:relative;top:0px"></span>错误码管理<span style="margin-left:9px;font-size:10px;vertical-align:1px">×</span></div>
  </div>
  <div id="content">
   <div class="lbl" style="left:20px;top:104px;width:88px">错误码类型</div>
   <div class="inp" style="left:120px;top:104px;width:183px">请选择错误码类型<span class="abs" style="left:159px;top:11px;line-height:0"><svg width="12" height="7" viewBox="0 0 12 7"><path d="M0.5 0.5L6 6L11.5 0.5" stroke="#c0c4cc" stroke-width="1" fill="none"/></svg></span></div>
   <div class="lbl" style="left:313px;top:104px;width:88px">应用名</div>
   <div class="inp" style="left:413px;top:104px;width:183px">请输入应用名</div>
   <div class="lbl" style="left:606px;top:104px;width:88px">错误码编码</div>
   <div class="inp" style="left:706px;top:104px;width:183px">请输入错误码编码</div>
   <div class="lbl" style="left:899px;top:104px;width:88px">错误码提示</div>
   <div class="inp" style="left:999px;top:104px;width:183px">请输入错误码提示</div>
   <div class="lbl" style="left:20px;top:154px;width:88px">创建时间</div>
   <div class="inp" style="left:120px;top:154px;width:240px;padding:0"><span class="abs" style="left:10px;top:9px;line-height:0"><svg width="13" height="12" viewBox="0 0 13 12"><rect x="0.5" y="1.5" width="12" height="10" stroke="#c0c4cc" fill="none"/><path d="M0.5 4H12.5" stroke="#c0c4cc"/><path d="M3 0V2M10 0V2" stroke="#c0c4cc"/><g fill="#c0c4cc"><rect x="2.5" y="6" width="1.3" height="1"/><rect x="5" y="6" width="1.3" height="1"/><rect x="7.5" y="6" width="1.3" height="1"/><rect x="10" y="6" width="1.3" height="1"/><rect x="2.5" y="8.5" width="1.3" height="1"/><rect x="5" y="8.5" width="1.3" height="1"/><rect x="7.5" y="8.5" width="1.3" height="1"/></g></svg></span><span class="abs" style="left:42px;top:0">开始日期</span><span class="abs" style="left:116px;top:0;color:#606266;font-weight:bold">-</span><span class="abs" style="left:140px;top:0">结束日期</span></div>
   <div class="btn" style="left:370px;top:155px;width:73px;height:32px;background:#1890ff;color:#fff"><span class="abs" style="left:16px;top:10px;line-height:0"><svg width="12" height="12" viewBox="0 0 12 12"><circle cx="5.5" cy="5.5" r="4.6" stroke="#fff" stroke-width="1.1" fill="none"/><path d="M9 9L11.3 11.3" stroke="#fff" stroke-width="1.1"/></svg></span><span class="abs" style="left:33px;top:8px;line-height:16px">搜索</span></div>
   <div class="btn" style="left:453px;top:155px;width:73px;height:32px;background:#fff;border:1px solid #dcdfe6;color:#606266"><span class="abs" style="left:15px;top:9px;line-height:0"><svg width="12" height="12" viewBox="0 0 12 12"><path d="M10.3 4.2A4.6 4.6 0 0 0 1.8 4M1.7 7.8A4.6 4.6 0 0 0 10.2 8" stroke="#606266" stroke-width="1.1" fill="none"/><path d="M10.8 1.5V4.6H7.7Z" fill="#606266"/><path d="M1.2 10.5V7.4H4.3Z" fill="#606266"/></svg></span><span class="abs" style="left:32px;top:7px;line-height:16px">重置</span></div>
   <div class="btn" style="left:20px;top:205px;width:73px;height:28px;background:#1890ff;color:#fff"><span class="abs" style="left:16px;top:8px;line-height:0"><svg width="11" height="11" viewBox="0 0 11 11"><path d="M5.5 0V11M0 5.5H11" stroke="#fff" stroke-width="1.2"/></svg></span><span class="abs" style="left:33px;top:6px;line-height:16px">新增</span></div>
   <div class="btn" style="left:103px;top:205px;width:73px;height:28px;background:#fff8e6;border:1px solid #ffe0a3;color:#ffba00"><span class="abs" style="left:15px;top:7px;line-height:0"><svg width="11" height="11" viewBox="0 0 11 11"><path d="M5.5 0V7M2.3 4L5.5 7.2L8.7 4M0.5 10.3H10.5" stroke="#ffba00" stroke-width="1.2" fill="none"/></svg></span><span class="abs" style="left:32px;top:5px;line-height:16px">导出</span></div>
   <div class="btn" style="left:1347px;top:205px;width:28px;height:28px;border-radius:50%;border:1px solid #dcdfe6;background:#fff"><span class="abs" style="left:7px;top:7px;line-height:0"><svg width="12" height="12" viewBox="0 0 12 12"><circle cx="5.5" cy="5.5" r="4.6" stroke="#606266" stroke-width="1.1" fill="none"/><path d="M9 9L11.3 11.3" stroke="#606266" stroke-width="1.1"/></svg></span></div>
   <div class="btn" style="left:1385px;top:205px;width:28px;height:28px;border-radius:50%;border:1px solid #dcdfe6;background:#fff"><span class="abs" style="left:7px;top:7px;line-height:0"><svg width="12" height="12" viewBox="0 0 12 12"><path d="M10.3 4.2A4.6 4.6 0 0 0 1.8 4M1.7 7.8A4.6 4.6 0 0 0 10.2 8" stroke="#606266" stroke-width="1.1" fill="none"/><path d="M10.8 1.5V4.6H7.7Z" fill="#606266"/><path d="M1.2 10.5V7.4H4.3Z" fill="#606266"/></svg></span></div>
   <div class="abs" style="left:20px;top:242px;width:1387px;height:43px;background:#f8f8f9;border-bottom:1px solid #dfe6ec"></div>
   <div class="th" style="left:20px;top:242px;width:154px;height:43px;line-height:43px">编号</div>
   <div class="th" style="left:174px;top:242px;width:80px;height:43px;line-height:43px">类型</div>
   <div class="th" style="left:254px;top:242px;width:200px;height:43px;line-height:43px">应用名</div>
   <div class="th" style="left:454px;top:242px;width:120px;height:43px;line-height:43px">错误码编码</div>
   <div class="th" style="left:574px;top:242px;width:300px;height:43px;line-height:43px">错误码提示</div>
   <div class="th" style="left:874px;top:242px;width:200px;height:43px;line-height:43px">备注</div>
   <div class="th" style="left:1074px;top:242px;width:180px;height:43px;line-height:43px">创建时间</div>
   <div class="th" style="left:1254px;top:242px;width:153px;height:43px;line-height:43px">操作</div>
   <div class="row" style="left:20px;top:285.0px;height:49.5px;background:#fff"></div>
   <div class="td" style="left:20px;top:297.5px;width:154px;height:24px;line-height:24px;letter-spacing:0.4px">5311</div>
   <div class="abs" style="left:184px;top:295.5px"><span class="etag">自动生成</span></div>
   <div class="td" style="left:254px;top:297.5px;width:200px;height:24px;line-height:24px;letter-spacing:0.25px">yudao-admin-server</div>
   <div class="td" style="left:454px;top:297.5px;width:120px;height:24px;line-height:24px;letter-spacing:0.45px">1001000001</div>
   <div class="td" style="left:574px;top:297.5px;width:300px;height:24px;line-height:24px;">参数配置不存在</div>
   <div class="td" style="left:1074px;top:297.5px;width:180px;height:24px;line-height:24px;letter-spacing:0.55px">2022-03-10 23:59:13</div>
   <div class="abs op" style="left:1288px;top:301.5px;line-height:16px;white-space:nowrap"><span style="display:inline-block;vertical-align:-1px;line-height:0;margin-right:2px"><svg width="11" height="12" viewBox="0 0 11 12"><path d="M1.2 9.5L2 6.8L7.5 1.3A1 1 0 0 1 9 1.3L9.4 1.7A1 1 0 0 1 9.4 3.2L3.9 8.7Z" stroke="#1890ff" stroke-width="1" fill="none"/><path d="M4 11.3H10.5" stroke="#1890ff" stroke-width="1"/></svg></span>修改<span style="display:inline-block;width:12px"></span><span style="display:inline-block;vertical-align:-1px;line-height:0;margin-right:2px"><svg width="11" height="12" viewBox="0 0 11 12"><path d="M0.5 2.5H10.5M3.8 2.5V0.8H7.2V2.5M1.8 2.5V11.3H9.2V2.5M4.3 4.8V9M6.7 4.8V9" stroke="#1890ff" stroke-width="1" fill="none"/></svg></span>删除</div>
   <div class="row" style="left:20px;top:334.5px;height:49.5px;background:#fff"></div>
   <div class="td" style="left:20px;top:347.0px;width:154px;height:24px;line-height:24px;letter-spacing:0.4px">5312</div>
   <div class="abs" style="left:184px;top:345.0px"><span class="etag">自动生成</span></div>
   <div class="td" style="left:254px;top:347.0px;width:200px;height:24px;line-height:24px;letter-spacing:0.25px">yudao-admin-server</div>
   <div class="td" style="left:454px;top:347.0px;width:120px;height:24px;line-height:24px;letter-spacing:0.45px">1001000002</div>
   <div class="td" style="left:574px;top:347.0px;width:300px;height:24px;line-height:24px;">参数配置 key 重复</div>
   <div class="td" style="left:1074px;top:347.0px;width:180px;height:24px;line-height:24px;letter-spacing:0.55px">2022-03-10 23:59:13</div>
   <div class="abs op" style="left:1288px;top:351.0px;line-height:16px;white-space:nowrap"><span style="display:inline-block;vertical-align:-1px;line-height:0;margin-right:2px"><svg width="11" height="12" viewBox="0 0 11 12"><path d="M1.2 9.5L2 6.8L7.5 1.3A1 1 0 0 1 9 1.3L9.4 1.7A1 1 0 0 1 9.4 3.2L3.9 8.7Z" stroke="#1890ff" stroke-width="1" fill="none"/><path d="M4 11.3H10.5" stroke="#1890ff" stroke-width="1"/></svg></span>修改<span style="display:inline-block;width:12px"></span><span style="display:inline-block;vertical-align:-1px;line-height:0;margin-right:2px"><svg width="11" height="12" viewBox="0 0 11 12"><path d="M0.5 2.5H10.5M3.8 2.5V0.8H7.2V2.5M1.8 2.5V11.3H9.2V2.5M4.3 4.8V9M6.7 4.8V9" stroke="#1890ff" stroke-width="1" fill="none"/></svg></span>删除</div>
   <div class="row" style="left:20px;top:384.0px;height:49.5px;background:#fff"></div>
   <div class="td" style="left:20px;top:396.5px;width:154px;height:24px;line-height:24px;letter-spacing:0.4px">5313</div>
   <div class="abs" style="left:184px;top:394.5px"><span class="etag">自动生成</span></div>
   <div class="td" style="left:254px;top:396.5px;width:200px;height:24px;line-height:24px;letter-spacing:0.25px">yudao-admin-server</div>
   <div class="td" style="left:454px;top:396.5px;width:120px;height:24px;line-height:24px;letter-spacing:0.45px">1001000003</div>
   <div class="td" style="left:574px;top:396.5px;width:300px;height:24px;line-height:24px;">不能删除类型为系统内置的参数配置</div>
   <div class="td" style="left:1074px;top:396.5px;width:180px;height:24px;line-height:24px;letter-spacing:0.55px">2022-03-10 23:59:13</div>
   <div class="abs op" style="left:1288px;top:400.5px;line-height:16px;white-space:nowrap"><span style="display:inline-block;vertical-align:-1px;line-height:0;margin-right:2px"><svg width="11" height="12" viewBox="0 0 11 12"><path d="M1.2 9.5L2 6.8L7.5 1.3A1 1 0 0 1 9 1.3L9.4 1.7A1 1 0 0 1 9.4 3.2L3.9 8.7Z" stroke="#1890ff" stroke-width="1" fill="none"/><path d="M4 11.3H10.5" stroke="#1890ff" stroke-width="1"/></svg></span>修改<span style="display:inline-block;width:12px"></span><span style="display:inline-block;vertical-align:-1px;line-height:0;margin-right:2px"><svg width="11" height="12" viewBox="0 0 11 12"><path d="M0.5 2.5H10.5M3.8 2.5V0.8H7.2V2.5M1.8 2.5V11.3H9.2V2.5M4.3 4.8V9M6.7 4.8V9" stroke="#1890ff" stroke-width="1" fill="none"/></svg></span>删除</div>
   <div class="row" style="left:20px;top:433.5px;height:49.5px;background:#f5f7fa"></div>
   <div class="td" style="left:20px;top:446.0px;width:154px;height:24px;line-height:24px;letter-spacing:0.4px">5314</div>
   <div class="abs" style="left:184px;top:444.0px"><span class="etag">自动生成</span></div>
   <div class="td" style="left:254px;top:446.0px;width:200px;height:24px;line-height:24px;letter-spacing:0.25px">yudao-admin-server</div>
   <div class="td" style="left:454px;top:446.0px;width:120px;height:24px;line-height:24px;letter-spacing:0.45px">1001000004</div>
   <div class="td" style="left:574px;top:446.0px;width:300px;height:24px;line-height:24px;">不允许获取敏感配置到前端</div>
   <div class="td" style="left:1074px;top:446.0px;width:180px;height:24px;line-height:24px;letter-spacing:0.55px">2022-03-10 23:59:13</div>
   <div class="abs op" style="left:1288px;top:450.0px;line-height:16px;white-space:nowrap"><span style="display:inline-block;vertical-align:-1px;line-height:0;margin-right:2px"><svg width="11" height="12" viewBox="0 0 11 12"><path d="M1.2 9.5L2 6.8L7.5 1.3A1 1 0 0 1 9 1.3L9.4 1.7A1 1 0 0 1 9.4 3.2L3.9 8.7Z" stroke="#1890ff" stroke-width="1" fill="none"/><path d="M4 11.3H10.5" stroke="#1890ff" stroke-width="1"/></svg></span>修改<span style="display:inline-block;width:12px"></span><span style="display:inline-block;vertical-align:-1px;line-height:0;margin-right:2px"><svg width="11" height="12" viewBox="0 0 11 12"><path d="M0.5 2.5H10.5M3.8 2.5V0.8H7.2V2.5M1.8 2.5V11.3H9.2V2.5M4.3 4.8V9M6.7 4.8V9" stroke="#1890ff" stroke-width="1" fill="none"/></svg></span>删除</div>
   <div class="row" style="left:20px;top:483.0px;height:49.5px;background:#fff"></div>
   <div class="td" style="left:20px;top:495.5px;width:154px;height:24px;line-height:24px;letter-spacing:0.4px">5315</div>
   <div class="abs" style="left:184px;top:493.5px"><span class="etag">自动生成</span></div>
   <div class="td" style="left:254px;top:495.5px;width:200px;height:24px;line-height:24px;letter-spacing:0.25px">yudao-admin-server</div>
   <div class="td" style="left:454px;top:495.5px;width:120px;height:24px;line-height:24px;letter-spacing:0.45px">1001001000</div>
   <div class="td" style="left:574px;top:495.5px;width:300px;height:24px;line-height:24px;">定时任务不存在</div>
   <div class="td" style="left:1074px;top:495.5px;width:180px;height:24px;line-height:24px;letter-spacing:0.55px">2022-03-10 23:59:13</div>
   <div class="abs op" style="left:1288px;top:499.5px;line-height:16px;white-space:nowrap"><span style="display:inline-block;vertical-align:-1px;line-height:0;margin-right:2px"><svg width="11" height="12" viewBox="0 0 11 12"><path d="M1.2 9.5L2 6.8L7.5 1.3A1 1 0 0 1 9 1.3L9.4 1.7A1 1 0 0 1 9.4 3.2L3.9 8.7Z" stroke="#1890ff" stroke-width="1" fill="none"/><path d="M4 11.3H10.5" stroke="#1890ff" stroke-width="1"/></svg></span>修改<span style="display:inline-block;width:12px"></span><span style="display:inline-block;vertical-align:-1px;line-height:0;margin-right:2px"><svg width="11" height="12" viewBox="0 0 11 12"><path d="M0.5 2.5H10.5M3.8 2.5V0.8H7.2V2.5M1.8 2.5V11.3H9.2V2.5M4.3 4.8V9M6.7 4.8V9" stroke="#1890ff" stroke-width="1" fill="none"/></svg></span>删除</div>
   <div class="row" style="left:20px;top:532.5px;height:49.5px;background:#fff"></div>
   <div class="td" style="left:20px;top:545.0px;width:154px;height:24px;line-height:24px;letter-spacing:0.4px">5316</div>
   <div class="abs" style="left:184px;top:543.0px"><span class="etag">自动生成</span></div>
   <div class="td" style="left:254px;top:545.0px;width:200px;height:24px;line-height:24px;letter-spacing:0.25px">yudao-admin-server</div>
   <div class="td" style="left:454px;top:545.0px;width:120px;height:24px;line-height:24px;letter-spacing:0.45px">1001001001</div>
   <div class="td" style="left:574px;top:545.0px;width:300px;height:24px;line-height:24px;">定时任务的处理器已经存在</div>
   <div class="td" style="left:1074px;top:545.0px;width:180px;height:24px;line-height:24px;letter-spacing:0.55px">2022-03-10 23:59:13</div>
   <div class="abs op" style="left:1288px;top:549.0px;line-height:16px;white-space:nowrap"><span style="display:inline-block;vertical-align:-1px;line-height:0;margin-right:2px"><svg width="11" height="12" viewBox="0 0 11 12"><path d="M1.2 9.5L2 6.8L7.5 1.3A1 1 0 0 1 9 1.3L9.4 1.7A1 1 0 0 1 9.4 3.2L3.9 8.7Z" stroke="#1890ff" stroke-width="1" fill="none"/><path d="M4 11.3H10.5" stroke="#1890ff" stroke-width="1"/></svg></span>修改<span style="display:inline-block;width:12px"></span><span style="display:inline-block;vertical-align:-1px;line-height:0;margin-right:2px"><svg width="11" height="12" viewBox="0 0 11 12"><path d="M0.5 2.5H10.5M3.8 2.5V0.8H7.2V2.5M1.8 2.5V11.3H9.2V2.5M4.3 4.8V9M6.7 4.8V9" stroke="#1890ff" stroke-width="1" fill="none"/></svg></span>删除</div>
   <div class="row" style="left:20px;top:582.0px;height:49.5px;background:#fff"></div>
   <div class="td" style="left:20px;top:594.5px;width:154px;height:24px;line-height:24px;letter-spacing:0.4px">5317</div>
   <div class="abs" style="left:184px;top:592.5px"><span class="etag">自动生成</span></div>
   <div class="td" style="left:254px;top:594.5px;width:200px;height:24px;line-height:24px;letter-spacing:0.25px">yudao-admin-server</div>
   <div class="td" style="left:454px;top:594.5px;width:120px;height:24px;line-height:24px;letter-spacing:0.45px">1001001002</div>
   <div class="td" style="left:574px;top:594.5px;width:300px;height:24px;line-height:24px;">只允许修改为开启或者关闭状态</div>
   <div class="td" style="left:1074px;top:594.5px;width:180px;height:24px;line-height:24px;letter-spacing:0.55px">2022-03-10 23:59:13</div>
   <div class="abs op" style="left:1288px;top:598.5px;line-height:16px;white-space:nowrap"><span style="display:inline-block;vertical-align:-1px;line-height:0;margin-right:2px"><svg width="11" height="12" viewBox="0 0 11 12"><path d="M1.2 9.5L2 6.8L7.5 1.3A1 1 0 0 1 9 1.3L9.4 1.7A1 1 0 0 1 9.4 3.2L3.9 8.7Z" stroke="#1890ff" stroke-width="1" fill="none"/><path d="M4 11.3H10.5" stroke="#1890ff" stroke-width="1"/></svg></span>修改<span style="display:inline-block;width:12px"></span><span style="display:inline-block;vertical-align:-1px;line-height:0;margin-right:2px"><svg width="11" height="12" viewBox="0 0 11 12"><path d="M0.5 2.5H10.5M3.8 2.5V0.8H7.2V2.5M1.8 2.5V11.3H9.2V2.5M4.3 4.8V9M6.7 4.8V9" stroke="#1890ff" stroke-width="1" fill="none"/></svg></span>删除</div>
   <div class="row" style="left:20px;top:631.5px;height:49.5px;background:#fff"></div>
   <div class="td" style="left:20px;top:644.0px;width:154px;height:24px;line-height:24px;letter-spacing:0.4px">5318</div>
   <div class="abs" style="left:184px;top:642.0px"><span class="etag">自动生成</span></div>
   <div class="td" style="left:254px;top:644.0px;width:200px;height:24px;line-height:24px;letter-spacing:0.25px">yudao-admin-server</div>
   <div class="td" style="left:454px;top:644.0px;width:120px;height:24px;line-height:24px;letter-spacing:0.45px">1001001003</div>
   <div class="td" style="left:574px;top:644.0px;width:300px;height:24px;line-height:24px;">定时任务已经处于该状态，无需修改</div>
   <div class="td" style="left:1074px;top:644.0px;width:180px;height:24px;line-height:24px;letter-spacing:0.55px">2022-03-10 23:59:13</div>
   <div class="abs op" style="left:1288px;top:648.0px;line-height:16px;white-space:nowrap"><span style="display:inline-block;vertical-align:-1px;line-height:0;margin-right:2px"><svg width="11" height="12" viewBox="0 0 11 12"><path d="M1.2 9.5L2 6.8L7.5 1.3A1 1 0 0 1 9 1.3L9.4 1.7A1 1 0 0 1 9.4 3.2L3.9 8.7Z" stroke="#1890ff" stroke-width="1" fill="none"/><path d="M4 11.3H10.5" stroke="#1890ff" stroke-width="1"/></svg></span>修改<span style="display:inline-block;width:12px"></span><span style="display:inline-block;vertical-align:-1px;line-height:0;margin-right:2px"><svg width="11" height="12" viewBox="0 0 11 12"><path d="M0.5 2.5H10.5M3.8 2.5V0.8H7.2V2.5M1.8 2.5V11.3H9.2V2.5M4.3 4.8V9M6.7 4.8V9" stroke="#1890ff" stroke-width="1" fill="none"/></svg></span>删除</div>
   <div class="row" style="left:20px;top:681.0px;height:49.5px;background:#fff"></div>
   <div class="td" style="left:20px;top:693.5px;width:154px;height:24px;line-height:24px;letter-spacing:0.4px">5319</div>
   <div class="abs" style="left:184px;top:691.5px"><span class="etag">自动生成</span></div>
   <div class="td" style="left:254px;top:693.5px;width:200px;height:24px;line-height:24px;letter-spacing:0.25px">yudao-admin-server</div>
   <div class="td" style="left:454px;top:693.5px;width:120px;height:24px;line-height:24px;letter-spacing:0.45px">1001001004</div>
   <div class="td" style="left:574px;top:693.5px;width:300px;height:24px;line-height:24px;">只有开启状态的任务，才可以修改</div>
   <div class="td" style="left:1074px;top:693.5px;width:180px;height:24px;line-height:24px;letter-spacing:0.55px">2022-03-10 23:59:13</div>
   <div class="abs op" style="left:1288px;top:697.5px;line-height:16px;white-space:nowrap"><span style="display:inline-block;vertical-align:-1px;line-height:0;margin-right:2px"><svg width="11" height="12" viewBox="0 0 11 12"><path d="M1.2 9.5L2 6.8L7.5 1.3A1 1 0 0 1 9 1.3L9.4 1.7A1 1 0 0 1 9.4 3.2L3.9 8.7Z" stroke="#1890ff" stroke-width="1" fill="none"/><path d="M4 11.3H10.5" stroke="#1890ff" stroke-width="1"/></svg></span>修改<span style="display:inline-block;width:12px"></span><span style="display:inline-block;vertical-align:-1px;line-height:0;margin-right:2px"><svg width="11" height="12" viewBox="0 0 11 12"><path d="M0.5 2.5H10.5M3.8 2.5V0.8H7.2V2.5M1.8 2.5V11.3H9.2V2.5M4.3 4.8V9M6.7 4.8V9" stroke="#1890ff" stroke-width="1" fill="none"/></svg></span>删除</div>
   <div class="row" style="left:20px;top:730.5px;height:49.5px;background:#fff"></div>
   <div class="td" style="left:20px;top:743.0px;width:154px;height:24px;line-height:24px;letter-spacing:0.4px">5320</div>
   <div class="abs" style="left:184px;top:741.0px"><span class="etag">自动生成</span></div>
   <div class="td" style="left:254px;top:743.0px;width:200px;height:24px;line-height:24px;letter-spacing:0.25px">yudao-admin-server</div>
   <div class="td" style="left:454px;top:743.0px;width:120px;height:24px;line-height:24px;letter-spacing:0.45px">1001001005</div>
   <div class="td" style="left:574px;top:743.0px;width:300px;height:24px;line-height:24px;">CRON 表达式不正确</div>
   <div class="td" style="left:1074px;top:743.0px;width:180px;height:24px;line-height:24px;letter-spacing:0.55px">2022-03-10 23:59:13</div>
   <div class="abs op" style="left:1288px;top:747.0px;line-height:16px;white-space:nowrap"><span style="display:inline-block;vertical-align:-1px;line-height:0;margin-right:2px"><svg width="11" height="12" viewBox="0 0 11 12"><path d="M1.2 9.5L2 6.8L7.5 1.3A1 1 0 0 1 9 1.3L9.4 1.7A1 1 0 0 1 9.4 3.2L3.9 8.7Z" stroke="#1890ff" stroke-width="1" fill="none"/><path d="M4 11.3H10.5" stroke="#1890ff" stroke-width="1"/></svg></span>修改<span style="display:inline-block;width:12px"></span><span style="display:inline-block;vertical-align:-1px;line-height:0;margin-right:2px"><svg width="11" height="12" viewBox="0 0 11 12"><path d="M0.5 2.5H10.5M3.8 2.5V0.8H7.2V2.5M1.8 2.5V11.3H9.2V2.5M4.3 4.8V9M6.7 4.8V9" stroke="#1890ff" stroke-width="1" fill="none"/></svg></span>删除</div>
   <div class="abs" style="left:702px;top:813px;font-size:13px;color:#606266;line-height:16px;white-space:nowrap">共 170 条</div>
   <div class="inp" style="left:771px;top:808px;width:100px;height:27px;line-height:25px;color:#606266;padding-left:18px;border-radius:3px">10条/页<span class="abs" style="left:80px;top:9px;line-height:0"><svg width="12" height="7" viewBox="0 0 12 7"><path d="M0.5 0.5L6 6L11.5 0.5" stroke="#c0c4cc" stroke-width="1" fill="none"/></svg></span></div>
   <div class="pg" style="left:891px;top:808px;height:27px;line-height:27px;"><span style="display:inline-block;line-height:0;vertical-align:-1px"><svg width="6" height="10" viewBox="0 0 6 10"><path d="M5.5 0.5L1 5L5.5 9.5" stroke="#c0c4cc" stroke-width="1.1" fill="none"/></svg></span></div>
   <div class="pg" style="left:931px;top:808px;height:27px;line-height:27px;background:#1890ff;color:#fff;">1</div>
   <div class="pg" style="left:971px;top:808px;height:27px;line-height:27px;">2</div>
   <div class="pg" style="left:1011px;top:808px;height:27px;line-height:27px;">3</div>
   <div class="pg" style="left:1051px;top:808px;height:27px;line-height:27px;">4</div>
   <div class="pg" style="left:1091px;top:808px;height:27px;line-height:27px;">5</div>
   <div class="pg" style="left:1131px;top:808px;height:27px;line-height:27px;">6</div>
   <div class="pg" style="left:1171px;top:808px;height:27px;line-height:27px;">···</div>
   <div class="pg" style="left:1211px;top:808px;height:27px;line-height:27px;">17</div>
   <div class="pg" style="left:1251px;top:808px;height:27px;line-height:27px;"><span style="display:inline-block;line-height:0;vertical-align:-1px"><svg width="6" height="10" viewBox="0 0 6 10"><path d="M0.5 0.5L5 5L0.5 9.5" stroke="#303133" stroke-width="1.1" fill="none"/></svg></span></div>
   <div class="abs" style="left:1310px;top:813px;font-size:13px;color:#606266;line-height:16px">前往</div>
   <div class="inp" style="left:1340px;top:808px;width:46px;height:27px;line-height:25px;color:#606266;padding:0;text-align:center;border-radius:3px">1</div>
   <div class="abs" style="left:1390px;top:813px;font-size:13px;color:#606266;line-height:16px">页</div>
  </div>
</div>
<div id="sbshadow"></div>
<div class="redbox" style="left:16px;top:807px;width:162px;height:47px"></div>
<div class="redbox" style="left:1066px;top:870px;width:540px;height:50px"></div>
<div class="abs" style="left:1565px;top:76px;width:58px;height:847px;background:linear-gradient(to right,rgba(0,0,0,0),rgba(0,0,0,.02) 50%,rgba(0,0,0,.09))"></div>
<div class="abs" style="left:1623px;top:76px;width:2px;height:847px;background:#2a2b2e"></div>

</body></html>
